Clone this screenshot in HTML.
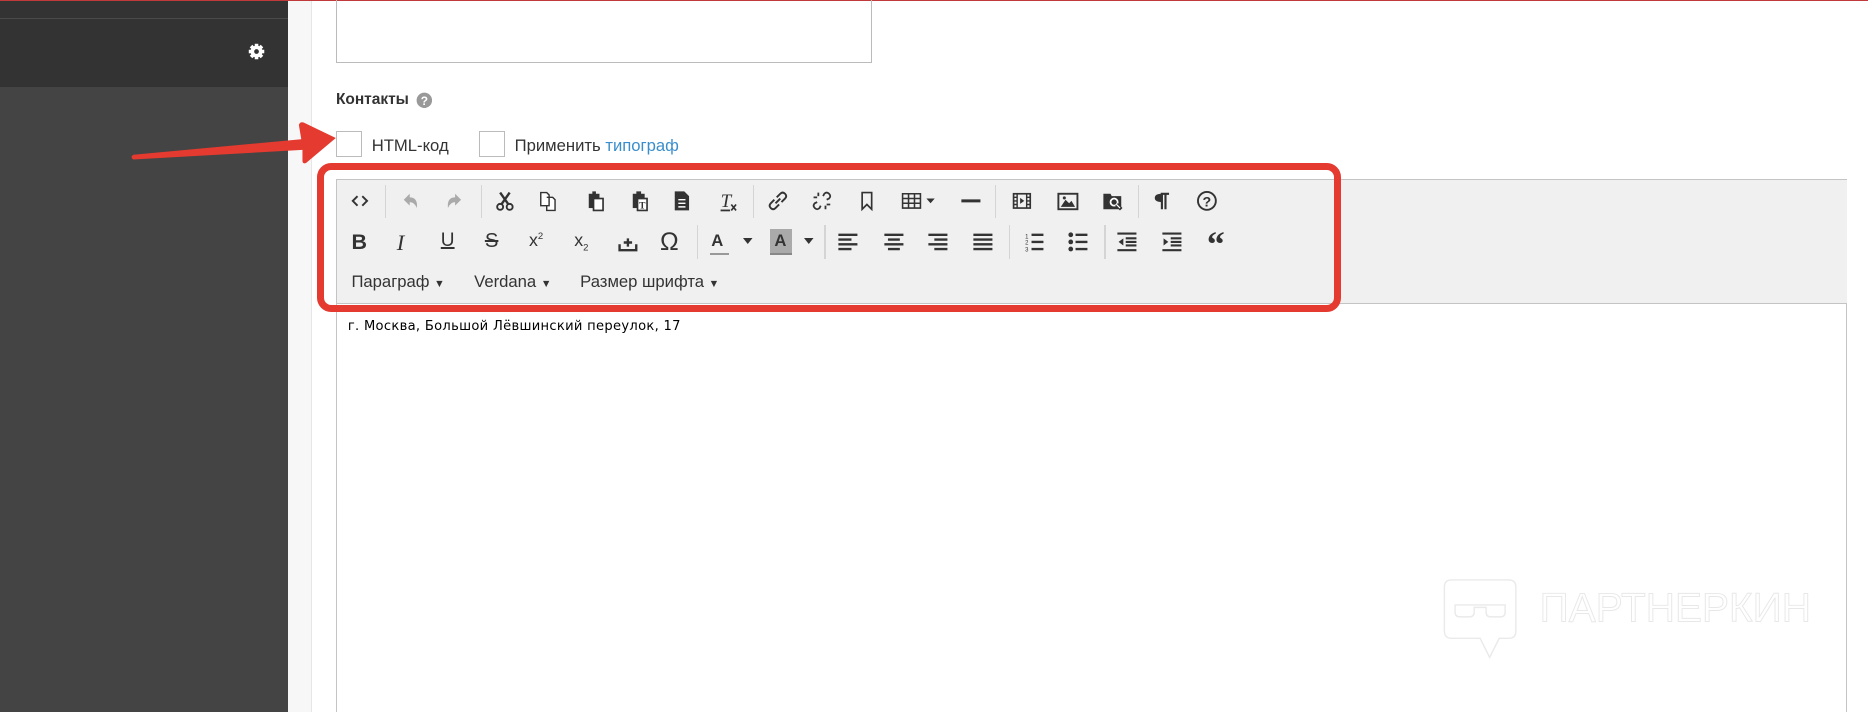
<!DOCTYPE html>
<html><head><meta charset="utf-8">
<style>
html,body{margin:0;padding:0;overflow:hidden;background:#fff}
#w{position:relative;width:1568px;height:598px;zoom:1.191327;font-family:"Liberation Sans","DejaVu Sans",sans-serif;color:#333;overflow:hidden}
.a{position:absolute}
.ic{position:absolute;width:20px;height:20px;top:0}
.sep{position:absolute;width:1px;background:#d4d4d4}
.t{font-size:14px;color:#333}
svg{display:block}
</style></head><body><div id="w">
<div class="a" style="left:0;top:0;width:1568px;height:1px;background:#c0393b"></div>
<div class="a" style="left:0;top:1px;width:242px;height:14px;background:#333"></div>
<div class="a" style="left:0;top:15px;width:242px;height:1px;background:#4a4a4a"></div>
<div class="a" style="left:0;top:16px;width:242px;height:57px;background:#333"></div>
<div class="a" style="left:0;top:73px;width:242px;height:525px;background:#444"></div>
<svg class="a" style="left:207px;top:35px" width="16" height="16" viewBox="0 0 16 16"><g fill="#fff"><circle cx="8" cy="8" r="5"/><rect x="6.5" y="1.5" width="3" height="13"/><rect x="1.5" y="6.5" width="13" height="3"/><rect x="6.5" y="1.5" width="3" height="13" transform="rotate(45 8 8)"/><rect x="6.5" y="1.5" width="3" height="13" transform="rotate(-45 8 8)"/></g><circle cx="8" cy="8" r="2" fill="#333"/></svg>
<div class="a" style="left:242px;top:1px;width:19px;height:597px;background:#f7f7f7;border-right:1px solid #e6e6e6"></div>
<div class="a" style="left:282px;top:-2px;width:448px;height:53px;border:1px solid #bbb"></div>
<div class="a" style="left:282px;top:76px;font-size:13px;font-weight:bold;color:#333">Контакты</div>
<svg class="a" style="left:349px;top:77px" width="14" height="14" viewBox="0 0 14 14"><circle cx="7" cy="7" r="6.5" fill="#999"/><text x="7" y="11" font-size="10" font-weight="bold" fill="#fff" text-anchor="middle" font-family="Liberation Sans">?</text></svg>
<div class="a" style="left:282px;top:110px;width:20px;height:20px;border:1px solid #bbb;background:#fff"></div>
<div class="a t" style="left:312px;top:114px">HTML-код</div>
<div class="a" style="left:402px;top:110px;width:20px;height:20px;border:1px solid #bbb;background:#fff"></div>
<div class="a t" style="left:432px;top:114px">Применить <span style="color:#3a8ecb">типограф</span></div>
<svg class="a" style="left:100px;top:95px" width="190" height="50" viewBox="0 0 190 50"><path d="M12 35 L153 22 L151 10 Q152 7 155 8 L182 21 L157 42 Q154 43 154 40 L154 31 L12 39 Q9 37 12 35 Z" fill="#e53a2f"/></svg>
<div class="a" style="left:282px;top:150px;width:1267px;height:460px;border:1px solid #c4c4c4;background:#fff"></div>
<div class="a" style="left:283px;top:151px;width:1267px;height:103px;background:#f0f0f0;border-bottom:1px solid #c4c4c4"></div>
<div class="a" style="left:292px;top:268px;font-family:'DejaVu Sans',Verdana,sans-serif;font-size:11px;letter-spacing:0.25px;color:#000">г. Москва, Большой Лёвшинский переулок, 17</div>
<div class="a" style="left:0;top:159px;width:1200px;height:22px">
 <div class="sep" style="left:323px;top:-4px;height:28px"></div><div class="sep" style="left:404px;top:-4px;height:28px"></div><div class="sep" style="left:632px;top:-4px;height:28px"></div><div class="sep" style="left:835px;top:-4px;height:28px"></div><div class="sep" style="left:955px;top:-4px;height:28px"></div>
 <svg class="ic" style="left:292px" viewBox="0 0 20 20"><path d="M8 6 L4 10 L8 14 M12 6 L16 10 L12 14" stroke="#333" stroke-width="1.6" fill="none"/></svg>
 <svg class="ic" style="left:335px" viewBox="0 0 20 20"><path d="M4 9 L9 4 L9 7 Q16 7 15 16 Q13 11 9 11 L9 14 Z" fill="#aaa"/></svg>
 <svg class="ic" style="left:371px" viewBox="0 0 20 20"><path d="M16 9 L11 4 L11 7 Q4 7 5 16 Q7 11 11 11 L11 14 Z" fill="#aaa"/></svg>
 <svg class="ic" style="left:414px" viewBox="0 0 20 20"><path d="M6 3 L13 13 M14 3 L7 13" stroke="#333" stroke-width="2" fill="none"/><circle cx="6" cy="15" r="2.5" stroke="#333" stroke-width="1.6" fill="none"/><circle cx="14" cy="15" r="2.5" stroke="#333" stroke-width="1.6" fill="none"/></svg>
 <svg class="ic" style="left:450px" viewBox="0 0 20 20"><path d="M4 3 H9 L11 5 V14 H4 Z M9 7 H14 L16 9 V18 H9 V14" stroke="#333" stroke-width="1.2" fill="#fff"/></svg>
 <svg class="ic" style="left:490px" viewBox="0 0 20 20"><rect x="4" y="4" width="9" height="12" fill="#333"/><rect x="7" y="2" width="3" height="3" fill="#333"/><rect x="8" y="8" width="8" height="10" fill="#fff" stroke="#333" stroke-width="1.4"/></svg>
 <svg class="ic" style="left:527px" viewBox="0 0 20 20"><rect x="4" y="4" width="10" height="12" fill="#333"/><rect x="7" y="2" width="4" height="3" fill="#333"/><rect x="8" y="8" width="8" height="10" fill="#fff" stroke="#333" stroke-width="1.4"/><text x="12" y="16.5" font-size="8" font-weight="bold" text-anchor="middle" fill="#333" font-family="Liberation Serif">T</text></svg>
 <svg class="ic" style="left:562px" viewBox="0 0 20 20"><path d="M4 2 H12 L16 6 V18 H4 Z" fill="#333"/><path d="M7 9 H13 M7 12 H13 M7 15 H13" stroke="#fff" stroke-width="1.2"/></svg>
 <svg class="ic" style="left:602px" viewBox="0 0 20 20"><text x="3" y="15" font-size="16" font-style="italic" fill="#333" font-family="Liberation Serif">T</text><path d="M3 18 H11" stroke="#333" stroke-width="1.5"/><path d="M12 13 L16 18 M16 13 L12 18" stroke="#333" stroke-width="1.4"/></svg>
 <svg class="ic" style="left:643px" viewBox="0 0 20 20"><path d="M9 7 L12 4 Q14 2 16 4 Q18 6 16 8 L13 11 M11 13 L8 16 Q6 18 4 16 Q2 14 4 12 L7 9 M8 12 L12 8" stroke="#333" stroke-width="1.6" fill="none"/></svg>
 <svg class="ic" style="left:680px" viewBox="0 0 20 20"><path d="M11 6 L12 4 Q14 2 16 4 Q18 6 16 8 L14 9 M9 14 L8 16 Q6 18 4 16 Q2 14 4 12 L6 11 M7 3 V6 M3 7 H6 M13 17 V14 M17 13 H14" stroke="#333" stroke-width="1.5" fill="none"/></svg>
 <svg class="ic" style="left:718px" viewBox="0 0 20 20"><path d="M6 3 H14 V17 L10 13 L6 17 Z" stroke="#333" stroke-width="1.4" fill="none"/></svg>
 <svg class="ic" style="left:755px;width:34px" viewBox="0 0 34 20"><path d="M3 4 H18 V16 H3 Z M3 8 H18 M3 12 H18 M8 4 V16 M13 4 V16" stroke="#333" stroke-width="1.3" fill="none"/><path d="M23 8 H30 L26.5 12 Z" fill="#333"/></svg>
 <svg class="ic" style="left:805px" viewBox="0 0 20 20"><path d="M2 10 H18" stroke="#333" stroke-width="2.5"/></svg>
 <svg class="ic" style="left:848px" viewBox="0 0 20 20"><rect x="3" y="4" width="14" height="12" stroke="#333" stroke-width="1.4" fill="none"/><path d="M6 4 V16 M14 4 V16 M3 7 H6 M3 10 H6 M3 13 H6 M14 7 H17 M14 10 H17 M14 13 H17" stroke="#333" stroke-width="1.2"/><path d="M8.5 7.5 L12 10 L8.5 12.5 Z" fill="#333"/></svg>
 <svg class="ic" style="left:886px" viewBox="0 0 20 20"><rect x="2" y="4" width="16" height="13" stroke="#333" stroke-width="1.6" fill="none"/><path d="M4 15 L8 9 L11 12 L13 10 L16 15 Z" fill="#333"/><circle cx="7" cy="7.5" r="1.3" fill="#333"/></svg>
 <svg class="ic" style="left:924px" viewBox="0 0 20 20"><path d="M2 4 H8 L9 6 H17 V17 H2 Z" fill="#333"/><circle cx="11" cy="11" r="3" stroke="#fff" stroke-width="1.5" fill="none"/><path d="M13 13 L17 17" stroke="#333" stroke-width="3"/><path d="M13 13 L16 16" stroke="#fff" stroke-width="1"/></svg>
 <svg class="ic" style="left:965px" viewBox="0 0 20 20"><path d="M9 4 H16 M10 4 V17 M13 4 V17" stroke="#333" stroke-width="1.8" fill="none"/><path d="M10 4 Q4 4 4 7.5 Q4 11 10 11 Z" fill="#333"/></svg>
 <svg class="ic" style="left:1003px" viewBox="0 0 20 20"><circle cx="10" cy="10" r="7.5" stroke="#333" stroke-width="1.6" fill="none"/><text x="10" y="14.5" font-size="12" font-weight="bold" text-anchor="middle" fill="#333" font-family="Liberation Sans">?</text></svg>
</div>
<div class="a" style="left:0;top:193px;width:1200px;height:22px">
 <div class="sep" style="left:585px;top:-4px;height:28px"></div><div class="sep" style="left:692px;top:-4px;height:28px"></div><div class="sep" style="left:847px;top:-4px;height:28px"></div><div class="sep" style="left:927px;top:-4px;height:28px"></div>
 <div class="a" style="left:295px;top:0;font-size:18px;font-weight:bold">B</div>
 <div class="a" style="left:333px;top:0;font-size:19px;font-style:italic;font-family:'Liberation Serif',serif">I</div>
 <div class="a" style="left:370px;top:0;font-size:16px;text-decoration:underline;text-decoration-thickness:2px">U</div>
 <div class="a" style="left:407px;top:0;font-size:17px;text-decoration:line-through">S</div>
 <div class="a" style="left:444px;top:0;font-size:15px">x<sup style="font-size:8px">2</sup></div>
 <div class="a" style="left:482px;top:0;font-size:15px">x<sub style="font-size:8px">2</sub></div>
 <svg class="ic" style="left:517px" viewBox="0 0 20 20"><path d="M3 12 V17 H17 V12 M10 7 V14 M6.5 10.5 H13.5" stroke="#333" stroke-width="2" fill="none"/></svg>
 <div class="a" style="left:554px;top:-2px;font-size:21px">Ω</div>
 <div class="a" style="left:597px;top:1px;font-size:14px;font-weight:bold">A</div><div class="a" style="left:596px;top:19px;width:16px;height:2px;background:#999"></div>
 <svg class="a" style="left:624px;top:7px" width="9" height="6"><path d="M0 0 H8 L4 5 Z" fill="#333"/></svg>
 <div class="a" style="left:646px;top:-1px;width:19px;height:20px;background:#aaa"></div><div class="a" style="left:650px;top:1px;font-size:14px;font-weight:bold">A</div><div class="a" style="left:646px;top:19px;width:19px;height:2px;background:#888"></div>
 <svg class="a" style="left:675px;top:7px" width="9" height="6"><path d="M0 0 H8 L4 5 Z" fill="#333"/></svg>
 <svg class="ic" style="left:702px" viewBox="0 0 20 20"><path d="M2 4 H18 M2 8 H13 M2 12 H18 M2 16 H13" stroke="#333" stroke-width="2"/></svg>
 <svg class="ic" style="left:740px" viewBox="0 0 20 20"><path d="M2 4 H18 M5 8 H15 M2 12 H18 M5 16 H15" stroke="#333" stroke-width="2"/></svg>
 <svg class="ic" style="left:777px" viewBox="0 0 20 20"><path d="M2 4 H18 M7 8 H18 M2 12 H18 M7 16 H18" stroke="#333" stroke-width="2"/></svg>
 <svg class="ic" style="left:815px" viewBox="0 0 20 20"><path d="M2 4 H18 M2 8 H18 M2 12 H18 M2 16 H18" stroke="#333" stroke-width="2"/></svg>
 <svg class="ic" style="left:858px" viewBox="0 0 20 20"><path d="M8 4 H18 M8 10 H18 M8 16 H18" stroke="#333" stroke-width="2"/><text x="4" y="7" font-size="5" text-anchor="middle" fill="#333">1</text><text x="4" y="12" font-size="5" text-anchor="middle" fill="#333">2</text><text x="4" y="18" font-size="5" text-anchor="middle" fill="#333">3</text></svg>
 <svg class="ic" style="left:895px" viewBox="0 0 20 20"><path d="M8 4 H18 M8 10 H18 M8 16 H18" stroke="#333" stroke-width="2"/><circle cx="4" cy="4" r="2" fill="#333"/><circle cx="4" cy="10" r="2" fill="#333"/><circle cx="4" cy="16" r="2" fill="#333"/></svg>
 <svg class="ic" style="left:936px" viewBox="0 0 20 20"><path d="M2 3 H18 M9 7 H18 M9 10 H18 M9 13 H18 M2 17 H18" stroke="#333" stroke-width="1.8"/><path d="M7 7 L3 10 L7 13 Z" fill="#333"/></svg>
 <svg class="ic" style="left:974px" viewBox="0 0 20 20"><path d="M2 3 H18 M9 7 H18 M9 10 H18 M9 13 H18 M2 17 H18" stroke="#333" stroke-width="1.8"/><path d="M3 7 L7 10 L3 13 Z" fill="#333"/></svg>
 <div class="a" style="left:1013px;top:-6px;font-size:30px;font-weight:bold;font-family:'Liberation Serif',serif">“</div>
</div>
<div class="a t" style="left:295px;top:228px">Параграф <span style="font-size:9px">▼</span></div>
<div class="a t" style="left:398px;top:228px">Verdana <span style="font-size:9px">▼</span></div>
<div class="a t" style="left:487px;top:228px">Размер шрифта <span style="font-size:9px">▼</span></div>
<div class="a" style="left:266px;top:137px;width:848px;height:113px;border:6px solid #e53a2f;border-radius:12px"></div>
<svg class="a" style="left:1210px;top:482px" width="330" height="76" viewBox="0 0 330 76"><path d="M8 5 H56 Q62 5 62 11 V48 Q62 54 56 54 H48 L40 70 L32 54 H8 Q2 54 2 48 V11 Q2 5 8 5 Z" stroke="#eaeaea" stroke-width="1.2" fill="none"/><path d="M11 26 H53 V32 Q53 36 49 36 H41 Q37 36 37 32 V28 H27 V32 Q27 36 23 36 H15 Q11 36 11 32 Z" stroke="#eaeaea" stroke-width="1.2" fill="none"/><text x="82" y="40" font-size="34" font-family="Liberation Sans" fill="none" stroke="#e8e8e8" stroke-width="0.8">ПАРТНЕРКИН</text></svg>
</div></body></html>
